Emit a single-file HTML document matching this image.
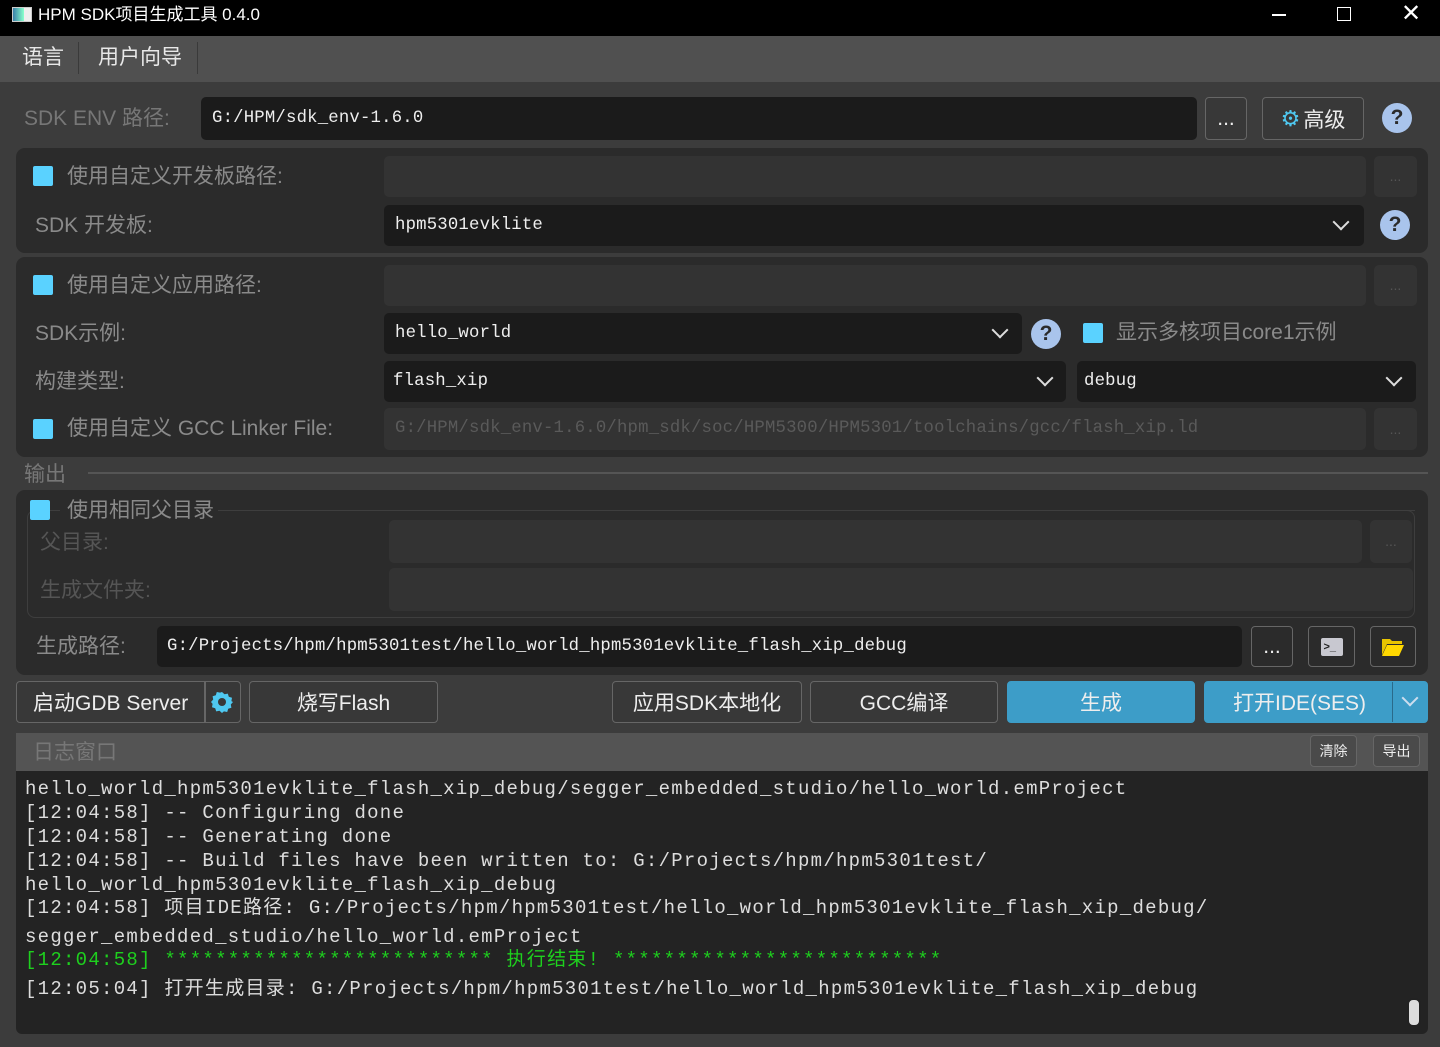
<!DOCTYPE html>
<html><head><meta charset="utf-8"><style>
*{margin:0;padding:0;box-sizing:border-box}
body{width:1440px;height:1047px;background:#3c3c3c;position:relative;overflow:hidden;font-family:"Liberation Sans","Noto Sans CJK SC",sans-serif;color:#8c8c8c}
.a{position:absolute}
.t{position:absolute;white-space:nowrap;line-height:1}
.inp{position:absolute;background:#1b1b1b;border-radius:5px;color:#eee;font-family:"Liberation Mono","Noto Serif CJK SC",monospace;font-size:17.3px;letter-spacing:0.2px;padding-left:11px;display:flex;align-items:center;white-space:nowrap}
.dis{position:absolute;background:#333;border-radius:5px}
.grp{position:absolute;background:#2b2b2b;border-radius:9px}
.cb{position:absolute;width:20px;height:20px;background:#5ad2ff;border-radius:2px}
.lbl{position:absolute;font-size:21px;color:#8a8a8a;white-space:nowrap;line-height:1}
.btn{position:absolute;border:1.5px solid #666;border-radius:4px;background:#383838;color:#eee;font-size:21px;display:flex;align-items:center;justify-content:center;white-space:nowrap}
.blue{background:#3d9dc8;border-color:#3d9dc8}
.q{position:absolute;width:30px;height:30px;border-radius:50%;background:#a9c4ec;color:#2b2b2b;font-weight:bold;font-size:21px;display:flex;align-items:center;justify-content:center}
.chev{position:absolute;width:12px;height:12px;border-right:2px solid #ddd;border-bottom:2px solid #ddd;transform:rotate(45deg)}
.log{font-family:"Liberation Mono","Noto Sans CJK SC",monospace;font-size:19px;letter-spacing:1.27px;color:#ddd;position:absolute;left:25px;white-space:pre;line-height:1}
</style></head><body>
<div class="a" style="left:0;top:0;width:1440px;height:36px;background:#000"></div>
<div class="a" style="left:12px;top:7px;width:20px;height:15px;background:linear-gradient(90deg,#3a7fa8,#8fc 60%,#eee 60%);border:1px solid #ccc"></div>
<div class="t" style="left:38px;top:6px;font-size:17px;color:#fff">HPM SDK项目生成工具 0.4.0</div>
<div class="a" style="left:1272px;top:14px;width:14px;height:1.5px;background:#fff"></div>
<div class="a" style="left:1337px;top:7px;width:14px;height:14px;border:1.5px solid #fff"></div>
<div class="t" style="left:1401px;top:2px;font-size:24px;color:#fff">✕</div>
<div class="a" style="left:0;top:36px;width:1440px;height:46px;background:#505050"></div>
<div class="t" style="left:22px;top:47px;font-size:21px;color:#e8e8e8">语言</div>
<div class="a" style="left:78px;top:42px;width:1px;height:32px;background:#3a3a3a"></div>
<div class="t" style="left:98px;top:47px;font-size:21px;color:#e8e8e8">用户向导</div>
<div class="a" style="left:197px;top:42px;width:1px;height:32px;background:#3a3a3a"></div>
<div class="lbl" style="left:24px;top:108px;color:#777">SDK ENV 路径:</div>
<div class="inp" style="left:201px;top:97px;width:996px;height:43px">G:/HPM/sdk_env-1.6.0</div>
<div class="btn" style="left:1205px;top:97px;width:42px;height:43px">...</div>
<div class="btn" style="left:1262px;top:97px;width:102px;height:43px"><span style="color:#4fc8f0;font-size:22px;margin-right:3px">⚙</span>高级</div>
<div class="q" style="left:1382px;top:103px">?</div>
<div class="grp" style="left:16px;top:148px;width:1412px;height:105px"></div>
<div class="cb" style="left:33px;top:166px"></div>
<div class="lbl" style="left:67px;top:166px">使用自定义开发板路径:</div>
<div class="dis" style="left:384px;top:156px;width:982px;height:41px"></div>
<div class="dis" style="left:1374px;top:156px;width:43px;height:41px;color:#555;font-size:14px;text-align:center;line-height:41px">...</div>
<div class="lbl" style="left:35px;top:215px">SDK 开发板:</div>
<div class="inp" style="left:384px;top:205px;width:980px;height:41px">hpm5301evklite</div>
<div class="chev" style="left:1335px;top:216px"></div>
<div class="q" style="left:1380px;top:210px">?</div>
<div class="grp" style="left:16px;top:257px;width:1412px;height:200px"></div>
<div class="cb" style="left:33px;top:275px"></div>
<div class="lbl" style="left:67px;top:275px">使用自定义应用路径:</div>
<div class="dis" style="left:384px;top:265px;width:982px;height:41px"></div>
<div class="dis" style="left:1374px;top:265px;width:43px;height:41px;color:#555;font-size:14px;text-align:center;line-height:41px">...</div>
<div class="lbl" style="left:35px;top:323px">SDK示例:</div>
<div class="inp" style="left:384px;top:313px;width:638px;height:41px">hello_world</div>
<div class="chev" style="left:994px;top:324px"></div>
<div class="q" style="left:1031px;top:319px">?</div>
<div class="cb" style="left:1083px;top:323px"></div>
<div class="lbl" style="left:1116px;top:322px">显示多核项目core1示例</div>
<div class="lbl" style="left:35px;top:371px">构建类型:</div>
<div class="inp" style="left:384px;top:361px;width:682px;height:41px;padding-left:9px">flash_xip</div>
<div class="chev" style="left:1039px;top:372px"></div>
<div class="inp" style="left:1077px;top:361px;width:339px;height:41px;padding-left:7px">debug</div>
<div class="chev" style="left:1388px;top:372px"></div>
<div class="cb" style="left:33px;top:419px"></div>
<div class="lbl" style="left:67px;top:418px">使用自定义 GCC Linker File:</div>
<div class="dis" style="left:384px;top:408px;width:982px;height:42px;color:#5a5a5a;font-family:'Liberation Mono',monospace;font-size:17.3px;letter-spacing:0.2px;padding-left:11px;line-height:42px;white-space:nowrap">G:/HPM/sdk_env-1.6.0/hpm_sdk/soc/HPM5300/HPM5301/toolchains/gcc/flash_xip.ld</div>
<div class="dis" style="left:1374px;top:408px;width:43px;height:42px;color:#555;font-size:14px;text-align:center;line-height:42px">...</div>
<div class="lbl" style="left:24px;top:464px;color:#777">输出</div>
<div class="a" style="left:88px;top:472px;width:1340px;height:2px;background:#555"></div>
<div class="grp" style="left:16px;top:490px;width:1412px;height:185px"></div>
<div class="a" style="left:27px;top:510px;width:1388px;height:108px;border:1px solid #3e3e3e;border-radius:8px"></div>
<div class="a" style="left:215px;top:510px;width:1200px;height:1px;background:#3e3e3e"></div>
<div class="cb" style="left:30px;top:500px"></div>
<div class="a" style="left:60px;top:498px;width:158px;height:24px;background:#2b2b2b"></div>
<div class="lbl" style="left:67px;top:500px">使用相同父目录</div>
<div class="lbl" style="left:40px;top:532px;color:#555">父目录:</div>
<div class="dis" style="left:389px;top:520px;width:973px;height:43px"></div>
<div class="dis" style="left:1370px;top:520px;width:42px;height:43px;color:#555;font-size:14px;text-align:center;line-height:43px">...</div>
<div class="lbl" style="left:40px;top:580px;color:#555">生成文件夹:</div>
<div class="dis" style="left:389px;top:568px;width:1024px;height:43px"></div>
<div class="lbl" style="left:36px;top:636px">生成路径:</div>
<div class="inp" style="left:157px;top:626px;width:1085px;height:41px;padding-left:10px">G:/Projects/hpm/hpm5301test/hello_world_hpm5301evklite_flash_xip_debug</div>
<div class="btn" style="left:1251px;top:626px;width:42px;height:41px;background:#2b2b2b">...</div>
<div class="btn" style="left:1308px;top:626px;width:47px;height:41px;background:#2b2b2b"><div style="width:22px;height:18px;background:#c8c8d0;border-radius:2px;color:#222;font-size:11px;font-weight:bold;line-height:18px;padding-left:3px">&gt;_</div></div>
<div class="btn" style="left:1370px;top:626px;width:46px;height:41px;background:#2b2b2b"><svg width="24" height="20" viewBox="0 0 24 20"><path d="M1 2h8l2 2h10v3H6L1 18z" fill="#e8c400"/><path d="M6 8h17l-5 11H1z" fill="#ffd800"/></svg></div>
<div class="btn" style="left:16px;top:681px;width:225px;height:42px;justify-content:flex-start;padding-left:16px">启动GDB Server</div>
<div class="a" style="left:204px;top:682px;width:1.5px;height:40px;background:#666"></div>
<svg class="a" style="left:211px;top:691px" width="22" height="22" viewBox="0 0 22 22"><path d="M11 1l2.5 2.2 3.3-.6 1 3.2 3.2 1-.6 3.3L22 11l-2.2 2.5.6 3.3-3.2 1-1 3.2-3.3-.6L11 22l-2.5-2.2-3.3.6-1-3.2-3.2-1 .6-3.3L0 11l2.2-2.5-.6-3.3 3.2-1 1-3.2 3.3.6z" fill="#4fc8f0"/><circle cx="11" cy="11" r="4" fill="#383838"/></svg>
<div class="btn" style="left:249px;top:681px;width:189px;height:42px">烧写Flash</div>
<div class="btn" style="left:612px;top:681px;width:190px;height:42px">应用SDK本地化</div>
<div class="btn" style="left:810px;top:681px;width:188px;height:42px">GCC编译</div>
<div class="btn blue" style="left:1007px;top:681px;width:188px;height:42px">生成</div>
<div class="btn blue" style="left:1204px;top:681px;width:224px;height:42px;justify-content:flex-start;padding-left:28px">打开IDE(SES)</div>
<div class="a" style="left:1392px;top:682px;width:1px;height:40px;background:#2a6a8a"></div>
<div class="chev" style="left:1404px;top:692px;border-color:#cde"></div>
<div class="a" style="left:16px;top:733px;width:1412px;height:38px;background:#545454"></div>
<div class="lbl" style="left:33px;top:742px;color:#777">日志窗口</div>
<div class="btn" style="left:1310px;top:735px;width:47px;height:32px;background:#4a4a4a;font-size:14px;border-color:#666">清除</div>
<div class="btn" style="left:1373px;top:735px;width:47px;height:32px;background:#4a4a4a;font-size:14px;border-color:#666">导出</div>
<div class="a" style="left:16px;top:771px;width:1412px;height:263px;background:#232323;border-radius:0 0 6px 6px"></div>
<div class="log" style="top:780px">hello_world_hpm5301evklite_flash_xip_debug/segger_embedded_studio/hello_world.emProject</div>
<div class="log" style="top:804px">[12:04:58] -- Configuring done</div>
<div class="log" style="top:828px">[12:04:58] -- Generating done</div>
<div class="log" style="top:852px">[12:04:58] -- Build files have been written to: G:/Projects/hpm/hpm5301test/</div>
<div class="log" style="top:876px">hello_world_hpm5301evklite_flash_xip_debug</div>
<div class="log" style="top:899px">[12:04:58] 项目IDE路径: G:/Projects/hpm/hpm5301test/hello_world_hpm5301evklite_flash_xip_debug/</div>
<div class="log" style="top:928px">segger_embedded_studio/hello_world.emProject</div>
<div class="log" style="top:951px;color:#1ed01e">[12:04:58] ************************** 执行结束! **************************</div>
<div class="log" style="top:980px">[12:05:04] 打开生成目录: G:/Projects/hpm/hpm5301test/hello_world_hpm5301evklite_flash_xip_debug</div>
<div class="a" style="left:1407px;top:998px;width:14px;height:29px;background:#ddd;border-radius:6px;border:2px solid #222"></div>
</body></html>
